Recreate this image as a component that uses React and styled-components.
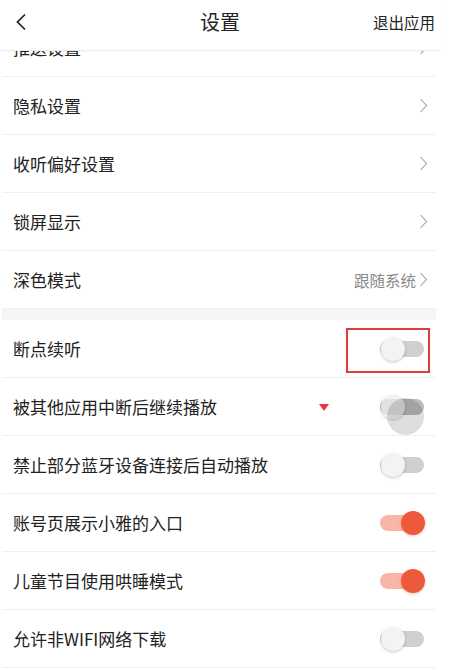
import React, { useLayoutEffect, useRef } from 'react';
import styled, { createGlobalStyle } from 'styled-components';

const GlobalStyle = createGlobalStyle`
  html, body {
    margin: 0;
    padding: 0;
    background: #fff;
  }
  body {
    font-family: "Noto Sans CJK SC", "Noto Sans", sans-serif;
    color: #222;
  }
`;

const SPage = styled.div`
  width: 453px;
  height: 670px;
  display: flex;
  flex-direction: column;
  overflow: hidden;
  background: #fff;
`;

const SHeader = styled.div`
  flex: none;
  width: 440px;
  height: 51px;
  padding-bottom: 7px;
  box-sizing: border-box;
  display: flex;
  align-items: center;
  border-bottom: 1px solid #ececec;
  box-shadow: 0 1px 2px rgba(0, 0, 0, 0.03);
  position: relative;
  z-index: 1;
  background: #fff;
`;

const SHeaderSide = styled.div`
  width: 100px;
  display: flex;
  align-items: center;
  justify-content: ${props => (props.right ? 'flex-end' : 'flex-start')};
  padding: ${props => (props.right ? '0 5px 0 0' : '0 0 0 15px')};
  box-sizing: border-box;
`;

const STitle = styled.div`
  flex: 1;
  text-align: center;
  font-size: 20px;
  color: #222;
`;

const SExit = styled.div`
  font-size: 15.5px;
  color: #222;
  white-space: nowrap;
`;

const SBody = styled.div`
  flex: 1;
  overflow-y: auto;
  scrollbar-width: none;
  &::-webkit-scrollbar {
    display: none;
  }
`;

const SList = styled.div`
  width: 434px;
  margin-left: 2px;
  padding-bottom: 40px;
`;

const SRow = styled.div`
  position: relative;
  height: 57px;
  display: flex;
  align-items: center;
  padding: ${props => (props.toggle ? '0 12px 0 11px' : '0 8px 0 11px')};
  border-bottom: 1px solid #efefef;
`;

const SLabel = styled.div`
  flex: 1;
  font-size: 17px;
  color: #222;
  white-space: nowrap;
`;

const SValue = styled.span`
  font-size: 15.5px;
  color: #8a8a8a;
  margin-right: 3px;
`;

const SGap = styled.div`
  height: 11px;
  background: #f5f5f5;
`;

const SMarker = styled.div`
  width: 0;
  height: 0;
  border-left: 5px solid transparent;
  border-right: 5px solid transparent;
  border-top: 7px solid #e8343a;
  margin-right: 51px;
  margin-top: 2px;
`;

const SToggle = styled.div`
  position: relative;
  width: 44px;
  height: 24px;
  flex: none;
`;

const STrack = styled.div`
  position: absolute;
  left: 0;
  right: 0;
  top: 4px;
  height: 16px;
  border-radius: 8px;
  background: ${props =>
    props.on ? '#f8b6a8' : props.pressed ? '#bcbcbc' : '#cfcfcf'};
`;

const SKnob = styled.div`
  position: absolute;
  top: 0;
  left: ${props => (props.on ? '21px' : '1px')};
  width: 24px;
  height: 24px;
  border-radius: 50%;
  background: ${props =>
    props.on ? '#ec5a3b' : props.pressed ? 'rgba(238,238,238,0.75)' : '#f3f3f3'};
  box-shadow: ${props =>
    props.on
      ? '0 1px 3px rgba(236, 90, 59, 0.35)'
      : '0 1px 3px rgba(0, 0, 0, 0.22)'};
`;

const SRipple = styled.div`
  position: absolute;
  left: 7px;
  top: 3px;
  width: 37px;
  height: 37px;
  border-radius: 50%;
  background: rgba(0, 0, 0, 0.13);
`;

const SHighlight = styled.div`
  position: absolute;
  right: 6px;
  top: 8px;
  width: 84px;
  height: 45px;
  box-sizing: border-box;
  border: 2.5px solid #e23a3a;
  pointer-events: none;
`;

function BackIcon() {
  return (
    <svg width="12" height="18" viewBox="0 0 12 18">
      <path d="M10 1.5 L2.5 9 L10 16.5" fill="none" stroke="#222" strokeWidth="1.7" />
    </svg>
  );
}

function Chevron() {
  return (
    <svg width="9" height="15" viewBox="0 0 9 15">
      <path d="M1.5 1 L7.5 7.5 L1.5 14" fill="none" stroke="#a0a0a0" strokeWidth="1.1" />
    </svg>
  );
}

function Toggle({ on, pressed }) {
  return (
    <SToggle>
      <STrack on={on} pressed={pressed} />
      <SKnob on={on} pressed={pressed} />
      {pressed && <SRipple />}
    </SToggle>
  );
}

const navItems = [
  { label: '推送设置' },
  { label: '隐私设置' },
  { label: '收听偏好设置' },
  { label: '锁屏显示' },
  { label: '深色模式', value: '跟随系统' }
];

const switchItems = [
  { label: '断点续听', on: false, highlight: true },
  { label: '被其他应用中断后继续播放', on: false, pressed: true, marker: true },
  { label: '禁止部分蓝牙设备连接后自动播放', on: false },
  { label: '账号页展示小雅的入口', on: true },
  { label: '儿童节目使用哄睡模式', on: true },
  { label: '允许非WIFI网络下载', on: false }
];

export default function App() {
  const bodyRef = useRef(null);

  useLayoutEffect(() => {
    if (bodyRef.current) {
      bodyRef.current.scrollTop = 32;
    }
  }, []);

  return (
    <>
      <GlobalStyle />
      <SPage>
        <SHeader>
          <SHeaderSide>
            <BackIcon />
          </SHeaderSide>
          <STitle>设置</STitle>
          <SHeaderSide right>
            <SExit>退出应用</SExit>
          </SHeaderSide>
        </SHeader>
        <SBody ref={bodyRef}>
          <SList>
            {navItems.map(item => (
              <SRow key={item.label}>
                <SLabel>{item.label}</SLabel>
                {item.value && <SValue>{item.value}</SValue>}
                <Chevron />
              </SRow>
            ))}
            <SGap />
            {switchItems.map(item => (
              <SRow key={item.label} toggle>
                <SLabel>{item.label}</SLabel>
                {item.marker && <SMarker />}
                <Toggle on={item.on} pressed={item.pressed} />
                {item.highlight && <SHighlight />}
              </SRow>
            ))}
          </SList>
        </SBody>
      </SPage>
    </>
  );
}
